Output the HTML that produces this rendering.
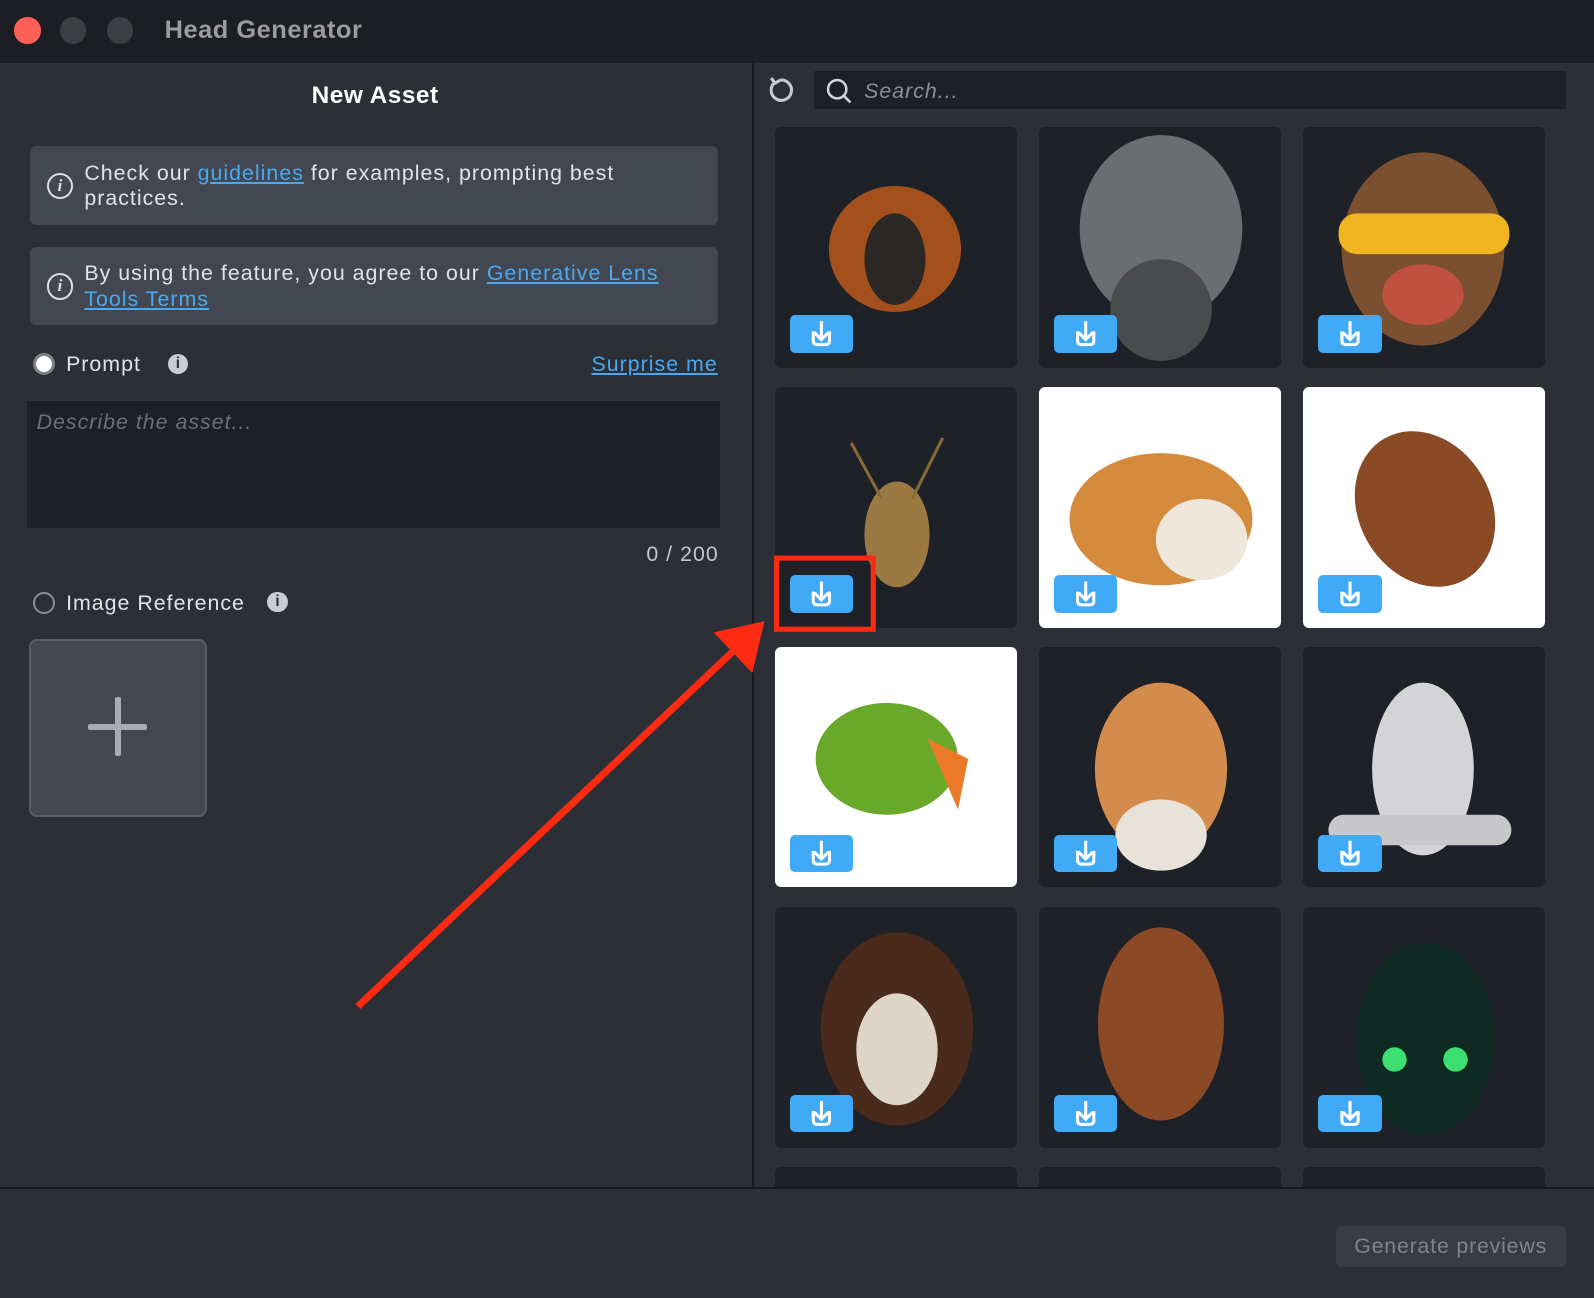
<!DOCTYPE html>
<html><head><meta charset="utf-8"><style>
html,body{margin:0;padding:0;background:#2c2f36;width:1594px;height:1298px;overflow:hidden}
#w{zoom:1.01658;position:relative;width:1568px;height:1277px;font-family:"Liberation Sans",sans-serif;background:#2c2f36;overflow:hidden}
.a{position:absolute}
.tl{position:absolute;top:17px;width:26px;height:26px;border-radius:50%}
.box{position:absolute;left:30px;width:676px;height:77px;background:#424751;border-radius:6px;color:#e2e3e6;font-size:21px;line-height:25px;letter-spacing:1px}
.box .t{position:absolute;left:53px;top:14px;width:590px}
.ic{position:absolute;left:16px;top:26px;width:22px;height:22px;border:2px solid #dcdde0;border-radius:50%;font:italic bold 17px "Liberation Serif",serif;text-align:center;line-height:22px;color:#dcdde0;letter-spacing:0}
a{color:#4aa8f0;text-decoration:underline}
.cell{position:absolute;width:238px;height:237px;background:#1e2128;border-radius:6px;overflow:hidden}
.cell.w{background:#fff}
.dl{position:absolute;left:15px;bottom:15px;width:62px;height:37px;background:#41aaf6;border-radius:5px}
.rad{position:absolute;width:18px;height:18px;border-radius:50%}
.lbl{position:absolute;font-size:21px;color:#e2e3e6;letter-spacing:1px}
</style></head><body><div id="w">
<div class="a" style="left:0;top:0;width:1568px;height:62px;background:#1c1e23"></div>
<div class="tl" style="left:14px;background:#fe5f57"></div>
<div class="tl" style="left:59px;background:#3c3e43"></div>
<div class="tl" style="left:105px;background:#3c3e43"></div>
<div class="a" style="left:162px;top:16px;font-size:25px;font-weight:bold;color:#9b9c9f;letter-spacing:0.5px">Head Generator</div>
<div class="a" style="left:740px;top:62px;width:2px;height:1108px;background:#191b1f"></div>
<div class="a" style="left:0;top:81px;width:738px;text-align:center;font-size:24px;font-weight:bold;color:#fff;letter-spacing:0.5px">New Asset</div>
<div class="box" style="top:144px"><div class="ic">i</div><div class="t">Check our <a>guidelines</a> for examples, prompting best practices.</div></div>
<div class="box" style="top:243px"><div class="ic">i</div><div class="t">By using the feature, you agree to our <a>Generative Lens Tools Terms</a></div></div>
<div class="rad" style="left:32px;top:347px;background:#fff;border:3px solid #7b8089;width:16px;height:16px"></div>
<div class="lbl" style="left:65px;top:346px">Prompt</div>
<div class="a" style="left:165px;top:348px;width:20px;height:20px;border-radius:50%;background:#c9ccd2;color:#2c2f36;font:bold 15px/20px 'Liberation Sans';text-align:center">i</div>
<div class="lbl" style="right:862px;top:346px"><a>Surprise me</a></div>
<div class="a" style="left:27px;top:394px;width:681px;height:125px;background:#1e2026"></div>
<div class="a" style="left:36px;top:403px;font-size:21px;font-style:italic;color:#6c6f76;letter-spacing:1px">Describe the asset...</div>
<div class="lbl" style="left:560px;top:533px;width:147px;text-align:right;color:#c4c6cb">0 / 200</div>
<div class="rad" style="left:32px;top:582px;border:2px solid #8a8e96"></div>
<div class="lbl" style="left:65px;top:581px">Image Reference</div>
<div class="a" style="left:263px;top:582px;width:20px;height:20px;border-radius:50%;background:#c9ccd2;color:#2c2f36;font:bold 15px/20px 'Liberation Sans';text-align:center">i</div>
<div class="a" style="left:29px;top:629px;width:171px;height:171px;background:#45484e;border:2px solid #5b5e64;border-radius:8px"></div>
<div class="a" style="left:87px;top:712px;width:58px;height:6px;background:#a9abb0;border-radius:2px"></div>
<div class="a" style="left:113px;top:686px;width:6px;height:58px;background:#a9abb0;border-radius:2px"></div>
<svg class="a" style="left:753px;top:74px" width="30" height="30" viewBox="0 0 30 30"><path d="M10 7 A10 10 0 1 0 15 5" fill="none" stroke="#c8ccd2" stroke-width="3"/><path d="M6 3 L10 8 L15 5" fill="none" stroke="#c8ccd2" stroke-width="3"/></svg>
<div class="a" style="left:801px;top:70px;width:739px;height:37px;background:#1e2026"></div>
<svg class="a" style="left:812px;top:76px" width="28" height="28"><circle cx="12" cy="12" r="9" fill="none" stroke="#d0d3d8" stroke-width="2.5"/><path d="M18 18 L25 25" stroke="#d0d3d8" stroke-width="2.5"/></svg>
<div class="a" style="left:850px;top:78px;font-size:21px;font-style:italic;color:#8a8e96;letter-spacing:1px">Search...</div>

<div class="cell" style="left:762px;top:125px"><svg width="238" height="237"><ellipse cx="118" cy="120" rx="65" ry="62" fill="#a4501c"/><ellipse cx="118" cy="130" rx="30" ry="45" fill="#2a2725"/></svg><div class="dl"></div></div>
<div class="cell" style="left:1022px;top:125px"><svg width="238" height="237"><ellipse cx="120" cy="100" rx="80" ry="92" fill="#6b6d70"/><ellipse cx="120" cy="180" rx="50" ry="50" fill="#4a4b4d"/></svg><div class="dl"></div></div>
<div class="cell" style="left:1282px;top:125px"><svg width="238" height="237"><ellipse cx="118" cy="120" rx="80" ry="95" fill="#7a5030"/><rect x="35" y="85" width="168" height="40" rx="18" fill="#f0b520"/><ellipse cx="118" cy="165" rx="40" ry="30" fill="#c05040"/></svg><div class="dl"></div></div>

<div class="cell" style="left:762px;top:381px"><svg width="238" height="237"><ellipse cx="120" cy="145" rx="32" ry="52" fill="#9a7a42"/><path d="M105 110 L75 55 M135 110 L165 50" stroke="#8a6a3a" stroke-width="3"/></svg><div class="dl"></div></div>
<div class="cell w" style="left:1022px;top:381px"><svg width="238" height="237"><ellipse cx="120" cy="130" rx="90" ry="65" fill="#d48b3c"/><ellipse cx="160" cy="150" rx="45" ry="40" fill="#efe6dc"/></svg><div class="dl"></div></div>
<div class="cell w" style="left:1282px;top:381px"><svg width="238" height="237"><ellipse cx="120" cy="120" rx="65" ry="80" fill="#8a4a25" transform="rotate(-30 120 120)"/></svg><div class="dl"></div></div>

<div class="cell w" style="left:762px;top:636px"><svg width="238" height="237"><ellipse cx="110" cy="110" rx="70" ry="55" fill="#6aa82a"/><path d="M150 90 L190 110 L180 160 Z" fill="#ea7a28"/></svg><div class="dl"></div></div>
<div class="cell" style="left:1022px;top:636px"><svg width="238" height="237"><ellipse cx="120" cy="120" rx="65" ry="85" fill="#d38c4c"/><ellipse cx="120" cy="185" rx="45" ry="35" fill="#e8e2d8"/></svg><div class="dl"></div></div>
<div class="cell" style="left:1282px;top:636px"><svg width="238" height="237"><ellipse cx="118" cy="120" rx="50" ry="85" fill="#d4d4d6"/><rect x="25" y="165" width="180" height="30" rx="15" fill="#c8c8ca"/></svg><div class="dl"></div></div>

<div class="cell" style="left:762px;top:892px"><svg width="238" height="237"><ellipse cx="120" cy="120" rx="75" ry="95" fill="#4a2a1a"/><ellipse cx="120" cy="140" rx="40" ry="55" fill="#ddd6c8"/></svg><div class="dl"></div></div>
<div class="cell" style="left:1022px;top:892px"><svg width="238" height="237"><ellipse cx="120" cy="115" rx="62" ry="95" fill="#8b4a25"/></svg><div class="dl"></div></div>
<div class="cell" style="left:1282px;top:892px"><svg width="238" height="237"><ellipse cx="120" cy="130" rx="68" ry="95" fill="#0e2a22"/><circle cx="90" cy="150" r="12" fill="#3ce070"/><circle cx="150" cy="150" r="12" fill="#3ce070"/></svg><div class="dl"></div></div>

<div class="cell" style="left:762px;top:1148px"></div>
<div class="cell" style="left:1022px;top:1148px"></div>
<div class="cell" style="left:1282px;top:1148px"></div>

<svg class="a" style="left:0;top:0" width="1568" height="1277">
<defs><path id="d" d="M808 316 V333 M801 327 L808 334 L815 327 M800 326 V335 Q800 339 804 339 H812 Q816 339 816 335 V326"/></defs>
<g fill="none" stroke="#fff" stroke-width="3">
<use href="#d"/><use href="#d" x="260"/><use href="#d" x="520"/>
<use href="#d" y="256"/><use href="#d" x="260" y="256"/><use href="#d" x="520" y="256"/>
<use href="#d" y="511"/><use href="#d" x="260" y="511"/><use href="#d" x="520" y="511"/>
<use href="#d" y="767"/><use href="#d" x="260" y="767"/><use href="#d" x="520" y="767"/>
</g>
<rect x="764" y="549" width="95" height="70" fill="none" stroke="#ff2a12" stroke-width="5"/>
<path d="M352 990 L725 637" stroke="#ff2a12" stroke-width="7"/>
<path d="M752 611 L740 662 L702 622 Z" fill="#ff2a12"/>
</svg>

<div class="a" style="left:0;top:1168px;width:1568px;height:109px;background:#2c2f36;border-top:2px solid #17191d"></div>
<div class="a" style="left:1314px;top:1206px;width:226px;height:40px;background:#393c44;border-radius:6px;color:#80838a;font-size:21px;line-height:40px;text-align:center;letter-spacing:0.8px">Generate previews</div>
</div></body></html>
